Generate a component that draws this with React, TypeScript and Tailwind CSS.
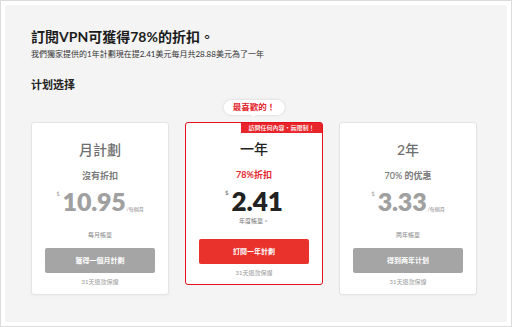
import React from "react";

type Plan = {
  name: string;
  deal: string;
  price: string;
  billing: string;
  cta: string;
};

const plans: Plan[] = [
  { name: "月計劃", deal: "沒有折扣", price: "10.95", billing: "每月帳單", cta: "獲得一個月計劃" },
  { name: "一年", deal: "78%折扣", price: "2.41", billing: "年度帳單。", cta: "訂閱一年計劃" },
  { name: "2年", deal: "70% 的优惠", price: "3.33", billing: "两年帳單", cta: "得到两年计划" },
];

// plain plan card (month / two year)
function PlanCard({ plan }: { plan: Plan }) {
  return (
    <div className="w-[138px] rounded-[3px] border border-[#e4e4e4] bg-white px-[13px] pt-[17px] pb-[8px] flex flex-col items-center shadow-[0_1px_2px_rgba(0,0,0,0.04)]">
      <div className="text-[14px] leading-[20px] text-[#6f6f6f] font-medium">{plan.name}</div>
      <div className="mt-[9px] text-[9px] leading-[13px] text-[#7a7a7a] font-semibold">{plan.deal}</div>
      <div className="mt-[7px] flex items-baseline text-[#a0a0a0]">
        <span className="self-start mt-[2px] mr-[3px] text-[6px] leading-none">$</span>
        <span className="text-[25px] leading-none font-extrabold tracking-[-0.2px]">{plan.price}</span>
        <span className="ml-[1px] text-[5px] leading-none text-[#888]">/每個月</span>
      </div>
      <div className="mt-[16px] text-[6px] leading-[9px] text-[#888]">{plan.billing}</div>
      <button className="mt-[9px] h-[25px] w-full rounded-[2px] bg-[#a5a5a5] text-[7px] font-bold text-white">
        {plan.cta}
      </button>
      <div className="mt-[4px] text-[6px] leading-[9px] text-[#999]">31天退款保證</div>
    </div>
  );
}

function BestCard({ plan }: { plan: Plan }) {
  return (
    <div className="relative w-[138px] rounded-[3px] border-[1.5px] border-[#e8101a] bg-white px-[13px] pt-[16px] pb-[7px] flex flex-col items-center">
      {/* speech bubble */}
      <div className="absolute -top-[23px] left-1/2 -translate-x-1/2 flex flex-col items-center">
        <div className="rounded-full bg-white px-[9px] h-[15px] flex items-center text-[8.5px] font-bold text-[#e3262c] shadow-[0_0_3px_rgba(0,0,0,0.15)]">
          最喜歡的！
        </div>
        <div className="w-0 h-0 border-x-[3px] border-x-transparent border-t-[3px] border-t-white -mt-px"></div>
      </div>
      <div className="absolute top-0 right-0 h-[10px] w-[81px] bg-[#e8252b] flex items-center justify-center text-[6px] leading-none text-white font-medium">
        訪問任何內容・無限制！
      </div>
      <div className="text-[14px] leading-[20px] text-[#222] font-medium">{plan.name}</div>
      <div className="mt-[9px] text-[9px] leading-[13px] text-[#e3262c] font-bold">{plan.deal}</div>
      <div className="mt-[7px] flex items-baseline text-[#222]">
        <span className="self-start mt-[2px] mr-[3px] text-[6px] leading-none text-[#666]">$</span>
        <span className="text-[26px] leading-none font-extrabold">{plan.price}</span>
      </div>
      <div className="mt-[2px] text-[6px] leading-[9px] text-[#777]">{plan.billing}</div>
      <button className="mt-[14px] h-[25px] w-full rounded-[2px] bg-[#e8322b] text-[7px] font-bold text-white">
        {plan.cta}
      </button>
      <div className="mt-[4px] text-[6px] leading-[9px] text-[#999]">31天退款保證</div>
    </div>
  );
}

export default function App() {
  return (
    <div className="w-[512px] h-[327px] border border-[#dcdcdc] bg-white p-[4px] font-['Lato','Noto_Sans_CJK_TC',sans-serif]">
      <div className="h-full rounded-[2px] bg-[#f4f4f4] px-[26px] pt-[22px]">
        <h1 className="text-[14px] leading-[20px] font-bold text-[#1c1c1c]">訂閱VPN可獲得78%的折扣。</h1>
        <p className="mt-[1px] text-[8px] leading-[12px] text-[#333]">
          我們獨家提供的1年計劃現在提2.41美元每月共28.88美元為了一年
        </p>
        <h2 className="mt-[17px] text-[11px] leading-[16px] font-bold text-[#222]">计划选择</h2>
        <div className="mt-[29px] flex items-start gap-[16px]">
          <PlanCard plan={plans[0]} />
          <BestCard plan={plans[1]} />
          <PlanCard plan={plans[2]} />
        </div>
      </div>
    </div>
  );
}
